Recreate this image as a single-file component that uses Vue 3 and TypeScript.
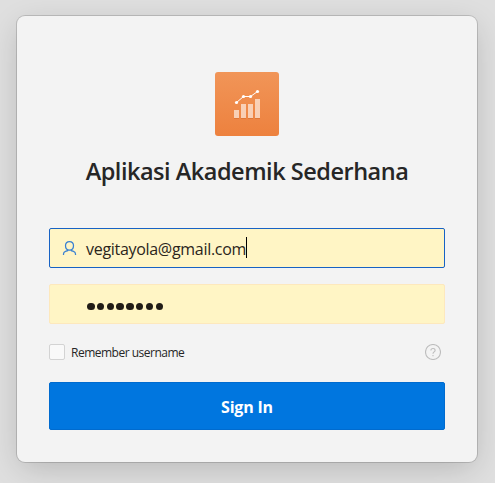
<script setup lang="ts">
import { ref } from 'vue'

const username = ref<string>('vegitayola@gmail.com')
const passwordLength = ref<number>(8)
const remember = ref<boolean>(false)
</script>

<template>
  <main class="page">
    <form class="card" @submit.prevent>
      <svg class="logo" viewBox="0 0 64 64" aria-hidden="true">
        <defs>
          <linearGradient id="logo-fill" x1="0" y1="0" x2="0" y2="1">
            <stop offset="0" stop-color="#f19558" />
            <stop offset="1" stop-color="#ed813e" />
          </linearGradient>
        </defs>
        <rect width="64" height="64" rx="3" fill="url(#logo-fill)" />
        <path d="M19 46.5h5M26 46.5h5M33 46.5h5M40 46.5h5" stroke="#c96022" stroke-opacity=".4" />
        <path d="M19 38h5v8h-5zM26 32h5v14h-5zM33 32h5v14h-5zM40 27h5v19h-5z" fill="#fff" fill-opacity=".6" />
        <path d="M21.5 30.5l7-6h7l7-5" fill="none" stroke="#fff" />
        <g fill="#fff">
          <circle cx="21.5" cy="30.5" r="1.6" />
          <circle cx="28.5" cy="24.5" r="1.6" />
          <circle cx="35.5" cy="24.5" r="1.6" />
          <circle cx="42.5" cy="19.5" r="1.6" />
        </g>
      </svg>

      <h1 class="title"><span>Aplikasi Akademik Sederhana</span></h1>

      <div class="field focused">
        <svg class="user" viewBox="0 0 16 16" aria-hidden="true">
          <path d="M7.500 1.500c2.400 0 4 1.800 4 4.200S9.900 10 7.500 10s-4-1.900-4-4.300 1.600-4.200 4-4.200zM1.500 15v-1c0-1.400.8-2.200 2-2.600l2-.7V9.500M13.500 15v-1c0-1.400-.8-2.200-2-2.600l-2-.7V9.500" />
        </svg>
        <span class="value">{{ username }}</span><i class="caret"></i>
      </div>

      <div class="field">
        <span class="dots"><i v-for="n in passwordLength" :key="n"></i></span>
      </div>

      <div class="options">
        <label class="remember">
          <input v-model="remember" type="checkbox" class="box" />
          <span class="label">Remember username</span>
        </label>
        <svg class="help" viewBox="0 0 16 16" aria-hidden="true">
          <circle cx="8" cy="8" r="7.500" />
          <path d="M5.900 6.500C5.900 5.200 6.700 4.500 8 4.500s2.100.8 2.100 1.900C10.100 7.900 8 7.900 8 9.700M8 11v1.300" />
        </svg>
      </div>

      <button class="submit" type="submit"><span>Sign In</span></button>
    </form>
  </main>
</template>

<style>
body {
  background: #dfdfdf;
}
</style>

<style scoped>
.page {
  box-sizing: border-box;
  height: 483px;
  padding: 16px 18px 21px 17px;
  overflow: hidden;
  font-family: "Open Sans", "Noto Sans", sans-serif;
  color: #262626;
}
.card {
  box-sizing: border-box;
  display: flex;
  flex-direction: column;
  height: 446px;
  padding: 56px 32px 32px;
  background: #f3f3f3;
  border-radius: 8px;
  box-shadow: 0 0 0 1px rgba(0, 0, 0, 0.15), 0 8px 32px -4px rgba(0, 0, 0, 0.2);
}
.logo {
  width: 64px;
  height: 64px;
  align-self: center;
}
.title {
  margin: 19px 0 41px;
  font-size: 23.5px;
  line-height: 32px;
  font-weight: 600;
  text-align: center;
  white-space: nowrap;
  letter-spacing: -0.48px;
}
.field {
  box-sizing: border-box;
  display: flex;
  align-items: center;
  height: 40px;
  margin-bottom: 16px;
  padding-left: 12px;
  background: #fff5c5;
  border: 1px solid #fde8bd;
  border-radius: 2px;
}
.focused {
  border-color: #1762c4;
}
.user {
  width: 16px;
  height: 16px;
  fill: none;
  stroke: #3980d2;
  stroke-width: 1.25;
}
.value {
  margin-left: 8px;
  padding-top: 2px;
  font-size: 16px;
  line-height: 24px;
  letter-spacing: -0.3px;
  white-space: nowrap;
  color: #2b251c;
}
.caret {
  width: 1px;
  height: 21px;
  margin-bottom: 1px;
  background: #000;
}
.dots {
  display: flex;
  gap: 2.300px;
  margin: 5px 0 0 25px;
}
.dots i {
  width: 7.500px;
  height: 7.500px;
  border-radius: 50%;
  background: #211c17;
}
.options {
  display: flex;
  align-items: center;
  justify-content: space-between;
  height: 16px;
  margin: 4px 4px 22px 0;
}
.remember {
  display: flex;
  align-items: center;
  gap: 6px;
  font-size: 12px;
  line-height: 16px;
  letter-spacing: -0.5px;
}
.label {
  padding-top: 2px;
}
.box {
  appearance: none;
  box-sizing: border-box;
  width: 16px;
  height: 16px;
  margin: 0;
  background: #f9f9f9;
  border: 1px solid #d3d3d3;
  border-radius: 2px;
}
.help {
  width: 16px;
  height: 16px;
  fill: none;
  stroke: #bdbdbd;
  stroke-width: 1.1;
}
.submit {
  height: 48px;
  padding: 0;
  border: 1px solid #006bcf;
  border-radius: 2px;
  background: #0076df;
  color: #fff;
  font: 700 16px/24px "Open Sans", "Noto Sans", sans-serif;
  letter-spacing: -0.2px;
}
.submit span {
  display: block;
  padding-top: 2px;
}
</style>
